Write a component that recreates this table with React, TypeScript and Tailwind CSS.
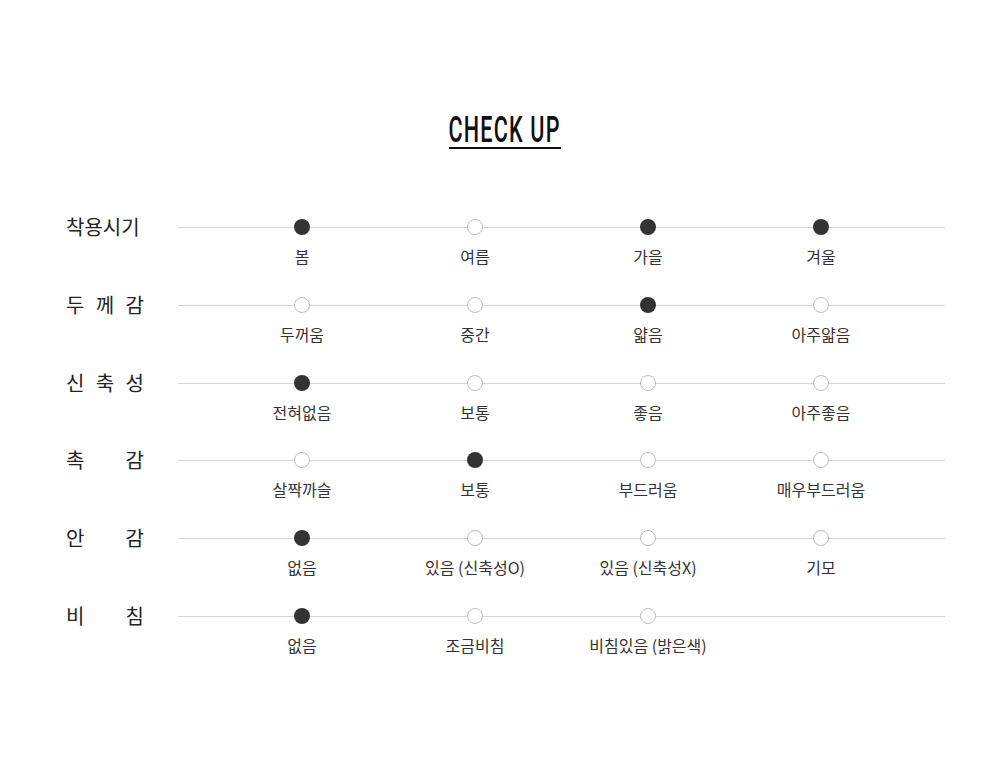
import React from "react";

type Row = { label: string[]; options: string[]; selected: number[] };

const rows: Row[] = [
  { label: ["착용시기"], options: ["봄", "여름", "가을", "겨울"], selected: [0, 2, 3] },
  { label: ["두", "께", "감"], options: ["두꺼움", "중간", "얇음", "아주얇음"], selected: [2] },
  { label: ["신", "축", "성"], options: ["전혀없음", "보통", "좋음", "아주좋음"], selected: [0] },
  { label: ["촉", "감"], options: ["살짝까슬", "보통", "부드러움", "매우부드러움"], selected: [1] },
  { label: ["안", "감"], options: ["없음", "있음 (신축성O)", "있음 (신축성X)", "기모"], selected: [0] },
  { label: ["비", "침"], options: ["없음", "조금비침", "비침있음 (밝은색)"], selected: [0] },
];

const kr = { fontFamily: '"Noto Sans CJK KR", "Noto Sans", sans-serif' };

const CheckRow = ({ row }: { row: Row }) => {
  return (
    <div className="flex h-[77.8px]">
      <div
        className={`w-[78px] h-[16px] flex items-center text-[20px] text-[#222] ${
          row.label.length > 1 ? "justify-between" : "justify-start"
        }`}
      >
        {row.label.map((c, i) => (
          <span key={i}>{c}</span>
        ))}
      </div>
      <div className="relative ml-[34px] w-[767px]">
        <span className="absolute left-0 right-0 top-[8px] h-[1px] bg-[#d6d6d6]"></span>
        <div className="relative grid grid-cols-4 px-[37.5px]">
          {row.options.map((o, i) => (
            <div key={i} className="flex flex-col items-center">
              {row.selected.includes(i) ? (
                <span className="w-4 h-4 rounded-full bg-[#333]"></span>
              ) : (
                <span className="w-4 h-4 rounded-full bg-white border border-[#bdbdbd]"></span>
              )}
              <span className="mt-[10px] text-[16px] leading-[22px] text-[#333] whitespace-nowrap">{o}</span>
            </div>
          ))}
        </div>
      </div>
    </div>
  );
};

export default function App() {
  return (
    <div className="w-[1000px] h-[781px] bg-white" style={kr}>
      <div className="pt-[114px] flex justify-center pl-[10px]">
        <div className="w-[112px] flex justify-center border-b-2 border-[#111]">
          <h2
            className="inline-block whitespace-nowrap text-[36px] leading-[33px] font-medium tracking-[2px] text-[#111] scale-x-[0.6]"
            style={{ fontFamily: 'Roboto, sans-serif' }}
          >
            CHECK UP
          </h2>
        </div>
      </div>
      <div className="ml-[66px] mt-[70px]">
        {rows.map((r, i) => (
          <CheckRow key={i} row={r} />
        ))}
      </div>
    </div>
  );
}
